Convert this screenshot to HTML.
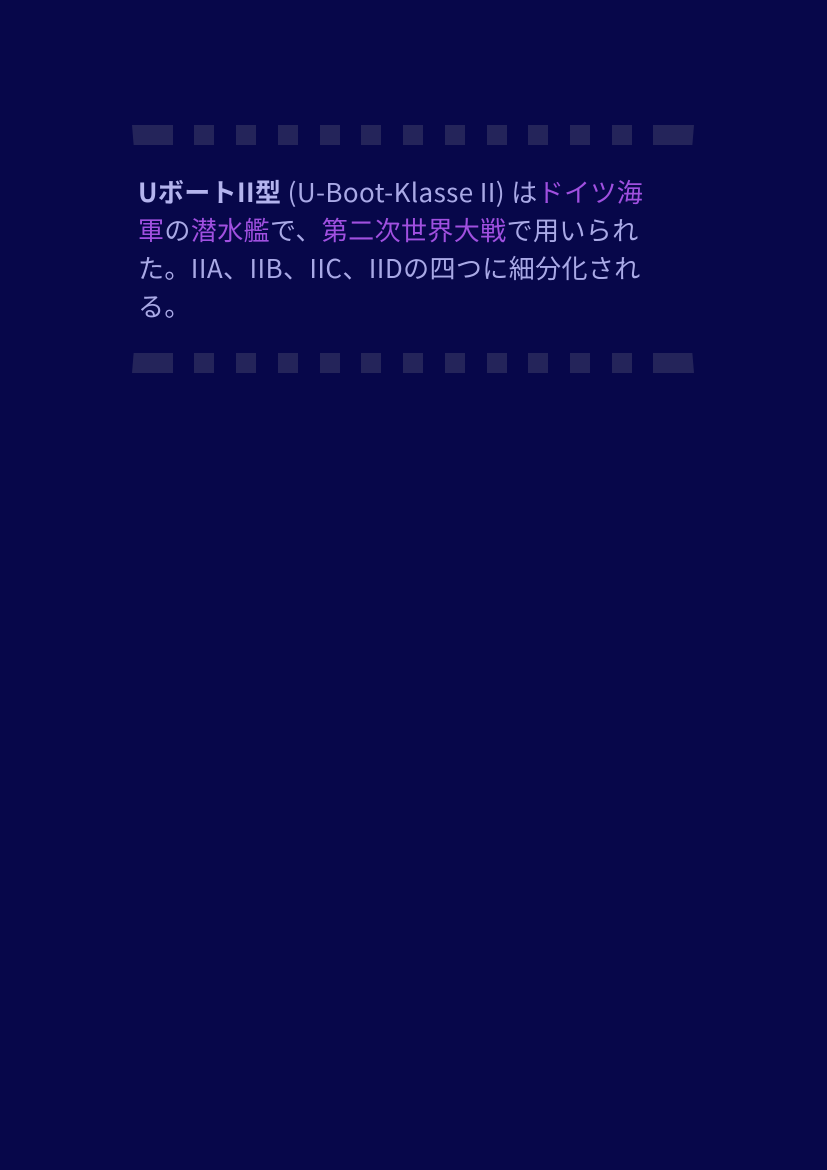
<!DOCTYPE html>
<html><head><meta charset="utf-8"><style>
html,body{margin:0;padding:0;background:#07074a;width:827px;height:1170px;overflow:hidden}
.strip{position:absolute;left:0;width:827px;height:20px}
.strip div{position:absolute;top:0;height:20px;background:#24245a}
.t{position:absolute;left:138px;top:173px;width:650px;white-space:nowrap;font-family:"Noto Sans CJK JP",sans-serif;font-size:26px;line-height:38px;color:#a9a9e6;letter-spacing:0.4px}
.t b{color:#b4b4ee}
.l{color:#a050e0}
</style></head><body>
<div class="strip" style="top:125px">
<div style="left:132px;width:41px;clip-path:polygon(0 0,100% 0,100% 100%,4% 100%)"></div>
<div style="left:194px;width:20px"></div><div style="left:236px;width:20px"></div><div style="left:278px;width:20px"></div><div style="left:320px;width:20px"></div><div style="left:361px;width:20px"></div><div style="left:403px;width:20px"></div><div style="left:445px;width:20px"></div><div style="left:487px;width:20px"></div><div style="left:528px;width:20px"></div><div style="left:570px;width:20px"></div><div style="left:612px;width:20px"></div>
<div style="left:653px;width:41px;clip-path:polygon(0 0,100% 0,96% 100%,0 100%)"></div>
</div>
<div class="t"><b>UボートII型</b> (U-Boot-Klasse II) は<span class="l">ドイツ海</span><br><span class="l">軍</span>の<span class="l">潜水艦</span>で、<span class="l">第二次世界大戦</span>で用いられ<br>た。IIA、IIB、IIC、IIDの四つに細分化され<br>る。</div>
<div class="strip" style="top:353px">
<div style="left:132px;width:41px;clip-path:polygon(4% 0,100% 0,100% 100%,0 100%)"></div>
<div style="left:194px;width:20px"></div><div style="left:236px;width:20px"></div><div style="left:278px;width:20px"></div><div style="left:320px;width:20px"></div><div style="left:361px;width:20px"></div><div style="left:403px;width:20px"></div><div style="left:445px;width:20px"></div><div style="left:487px;width:20px"></div><div style="left:528px;width:20px"></div><div style="left:570px;width:20px"></div><div style="left:612px;width:20px"></div>
<div style="left:653px;width:41px;clip-path:polygon(0 0,96% 0,100% 100%,0 100%)"></div>
</div>
</body></html>
